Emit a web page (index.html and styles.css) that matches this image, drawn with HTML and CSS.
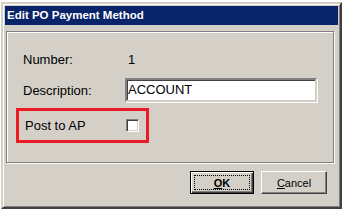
FILE: index.html
```html
<!DOCTYPE html>
<html lang="en">
<head>
    <meta charset="UTF-8">
    <title>Edit PO Payment Method</title>
    <link rel="stylesheet" href="styles.css">
</head>
<body>
    <div class="dialog">
        <!-- Title bar -->
        <div class="title-bar">Edit PO Payment Method</div>

        <div class="client">
            <!-- Fields group -->
            <div class="group-box">
                <div class="field-row">
                    <span class="field-label">Number:</span>
                    <span class="field-value">1</span>
                </div>
                <div class="field-row row-desc">
                    <span class="field-label">Description:</span>
                    <div class="text-input">ACCOUNT</div>
                </div>
                <div class="field-row row-post">
                    <span class="field-label">Post to AP</span>
                    <span class="checkbox"></span>
                </div>
            </div>

            <!-- Buttons -->
            <div class="button-bar">
                <button class="btn btn-default"><span class="focus-rect"><u>O</u>K</span></button>
                <button class="btn"><u>C</u>ancel</button>
            </div>
        </div>
    </div>
</body>
</html>
```

FILE: styles.css
```css
* {
    margin: 0;
    padding: 0;
    box-sizing: border-box;
}

html,
body {
    width: 100%;
    height: 100%;
    background-color: #fff;
    font-family: "Liberation Sans", Arial, sans-serif;
    font-size: 13px;
    color: #000;
    overflow: hidden;
}

/* Window frame */
.dialog {
    margin: 2px 0 0 1px;
    width: 341px;
    height: 207px;
    background-color: #d4d0c8;
    border: 2px solid;
    border-color: #d4d0c8 #404040 #404040 #d4d0c8;
    box-shadow: inset 1px 1px #fff, inset -1px -1px #808080;
    padding: 2px;
    display: flex;
    flex-direction: column;
}

.title-bar {
    height: 19px;
    background-color: #0a246a;
    color: #fff;
    font-weight: bold;
    font-size: 11.5px;
    line-height: 19px;
    padding-left: 2px;
    white-space: nowrap;
}

.client {
    flex: 1;
    display: flex;
    flex-direction: column;
    padding: 6px 4px 0 1px;
}

/* Etched group box */
.group-box {
    height: 132px;
    border: 1px solid #808080;
    box-shadow: inset 1px 1px #fff, 1px 1px #fff;
    padding: 20px 0 0 10px;
    display: flex;
    flex-direction: column;
}

.field-row {
    display: flex;
    align-items: center;
    height: 15px;
    line-height: 15px;
    padding-left: 6px;
}

.field-label {
    width: 102px;
    flex-shrink: 0;
    white-space: nowrap;
}

.field-value {
    padding-left: 3px;
}

.row-desc {
    margin-top: 11px;
    height: 24px;
}

.text-input {
    width: 192px;
    height: 24px;
    background-color: #fff;
    border: 2px solid;
    border-color: #808080 #d4d0c8 #d4d0c8 #808080;
    box-shadow: inset 1px 1px #404040, 1px 1px #fff;
    padding-left: 1px;
    line-height: 20px;
}

/* Highlighted row */
.row-post {
    margin-top: 6px;
    margin-left: -1px;
    width: 133px;
    height: 35px;
    border: 3px solid #ed1c24;
    padding-left: 6px;
    padding-bottom: 1px;
}

.row-post .field-label {
    width: 101px;
}

.checkbox {
    width: 13px;
    height: 13px;
    background-color: #fff;
    border: 1px solid;
    border-color: #808080 #fff #fff #808080;
    box-shadow: inset 1px 1px #404040, inset -1px -1px #d4d0c8;
}

/* Buttons */
.button-bar {
    display: flex;
    justify-content: flex-end;
    gap: 7px;
    margin-top: 8px;
    padding-right: 7px;
}

.btn {
    width: 66px;
    height: 23px;
    background-color: #d4d0c8;
    font-family: "Liberation Sans", Arial, sans-serif;
    font-size: 11px;
    color: #000;
    border: 1px solid;
    border-color: #fff #404040 #404040 #fff;
    box-shadow: inset -1px -1px #808080;
    display: flex;
    align-items: center;
    justify-content: center;
}

.btn-default {
    width: 64px;
    font-weight: bold;
    border: 1px solid #000;
    box-shadow: inset 1px 1px #fff, inset -1px -1px #404040, inset -2px -2px #808080;
    padding: 3px;
}

.focus-rect {
    width: 100%;
    height: 100%;
    border: 1px dotted #000;
    display: flex;
    align-items: center;
    justify-content: center;
}
```
